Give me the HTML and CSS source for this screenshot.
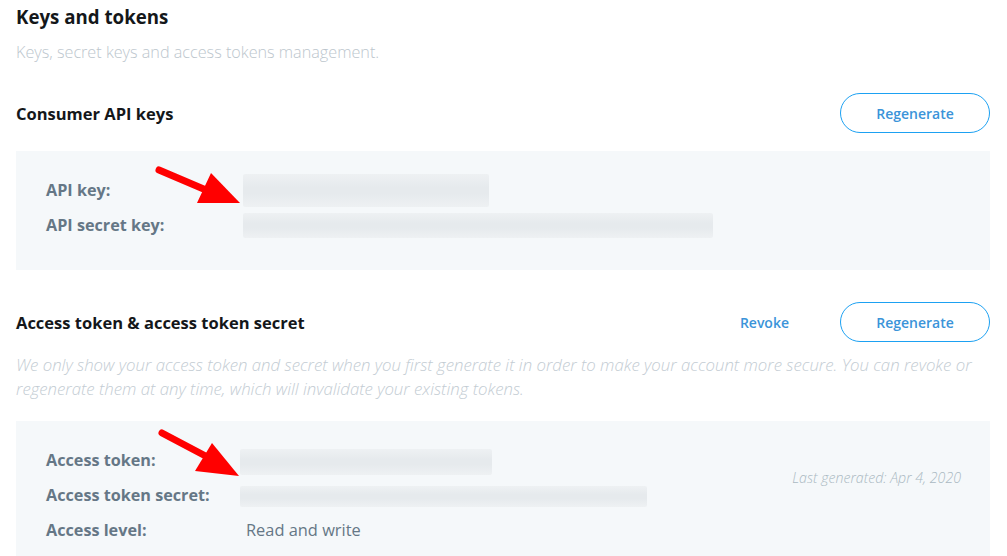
FILE: index.html
```html
<!DOCTYPE html>
<html lang="en">
<head>
<meta charset="utf-8">
<title>Keys and tokens</title>
<link rel="stylesheet" href="styles.css">
</head>
<body>
<div class="page">
  <h1 class="title">Keys and tokens</h1>
  <p class="subtitle">Keys, secret keys and access tokens management.</p>

  <section class="section">
    <div class="section-head">
      <h2 class="section-title">Consumer API keys</h2>
      <div class="actions">
        <button class="btn-outline">Regenerate</button>
      </div>
    </div>
    <div class="box box-keys">
      <div class="rows">
        <div class="label">API key:</div>
        <div class="value"><span class="blur w1"></span></div>
        <div class="label">API secret key:</div>
        <div class="value"><span class="blur w2"></span></div>
      </div>
    </div>
  </section>

  <section class="section section-tokens">
    <div class="section-head">
      <h2 class="section-title">Access token &amp; access token secret</h2>
      <div class="actions">
        <button class="btn-link">Revoke</button>
        <button class="btn-outline">Regenerate</button>
      </div>
    </div>
    <p class="note">We only show your access token and secret when you first generate it in order to make your account more secure. You can revoke or regenerate them at any time, which will invalidate your existing tokens.</p>
    <div class="box box-tokens">
      <div class="rows rows-tokens">
        <div class="label">Access token:</div>
        <div class="value"><span class="blur w3"></span></div>
        <div class="label">Access token secret:</div>
        <div class="value"><span class="blur w4"></span></div>
        <div class="label">Access level:</div>
        <div class="value text">Read and write</div>
        <div class="generated">Last generated: Apr 4, 2020</div>
      </div>
    </div>
  </section>

  <svg class="arrow arrow-1" width="100" height="60" viewBox="0 0 100 60">
    <line x1="6" y1="5" x2="60" y2="28" stroke="#ff0000" stroke-width="7" stroke-linecap="round"/>
    <polygon points="87,38 58,8 44,38" fill="#ff0000"/>
  </svg>
  <svg class="arrow arrow-2" width="100" height="60" viewBox="0 0 100 60">
    <line x1="7" y1="6" x2="60" y2="34" stroke="#ff0000" stroke-width="7" stroke-linecap="round"/>
    <polygon points="84,49 57,16 40,44" fill="#ff0000"/>
  </svg>
</div>
</body>
</html>
```

FILE: styles.css
```css
* { box-sizing: border-box; }
html, body { margin: 0; padding: 0; background: #ffffff; }
body {
  font-family: "Open Sans", "Noto Sans", sans-serif;
  color: #14171a;
  overflow: hidden;
}
.page {
  position: relative;
  padding: 4px 17px 0 16px;
  width: 1007px;
}
.title {
  margin: 0;
  font-size: 18.7px;
  font-weight: 700;
  line-height: 26px;
}
.subtitle {
  margin: 11px 0 0;
  font-size: 16.2px;
  font-weight: 300;
  line-height: 22px;
  color: #bcc6cd;
}
.section { margin-top: 30px; }
.section-tokens { margin-top: 32px; }
.section-head {
  display: flex;
  align-items: center;
  justify-content: space-between;
  height: 40px;
}
.section-title {
  margin: 0;
  font-size: 16.5px;
  font-weight: 700;
}
.actions {
  display: flex;
  align-items: center;
  gap: 51px;
}
.btn-outline {
  width: 150px;
  height: 40px;
  border: 1px solid #1da1f2;
  border-radius: 20px;
  background: #ffffff;
  color: #3b94d9;
  font-family: inherit;
  font-size: 14px;
  font-weight: 600;
  padding: 0;
}
.btn-link {
  border: 0;
  background: none;
  padding: 0;
  color: #3b94d9;
  font-family: inherit;
  font-size: 14px;
  font-weight: 600;
}
.note {
  margin: 11px 0 0;
  font-size: 16.8px;
  font-weight: 300;
  font-style: italic;
  line-height: 24px;
  color: #c3ccd3;
}
.box {
  background: #f5f8fa;
  margin-top: 18px;
}
.box-keys {
  padding: 21px 30px 28px;
  height: 119px;
}
.box-tokens {
  margin-top: 20px;
  padding: 21px 29px 27px 30px;
}
.rows {
  display: grid;
  grid-template-columns: 197px 1fr;
  grid-auto-rows: 35px;
  align-items: center;
}
.rows-tokens {
  grid-template-columns: 194px 1fr auto;
}
.label {
  font-size: 16.2px;
  font-weight: 700;
  color: #657786;
}
.value { display: flex; align-items: center; height: 35px; }
.value.text {
  font-size: 16.4px;
  color: #657786;
  padding-left: 6px;
}
.blur {
  display: block;
  background: linear-gradient(180deg, #eef1f3 0%, #e6eaed 40%, #e6eaed 60%, #eef1f3 100%);
  border-radius: 2px;
}
.w1 { width: 246px; height: 33px; margin-top: 2px; }
.w2 { width: 470px; height: 25px; margin-top: 2px; }
.w3 { width: 252px; height: 26px; margin-top: 5px; }
.w4 { width: 407px; height: 21px; margin-top: 4px; }
.generated {
  grid-column: 3;
  grid-row: 1 / 3;
  font-size: 14.2px;
  font-style: italic;
  font-weight: 300;
  color: #aab8c2;
}
.arrow {
  position: absolute;
  overflow: visible;
}
.arrow-1 { left: 153px; top: 165px; }
.arrow-2 { left: 155px; top: 427px; }
```
